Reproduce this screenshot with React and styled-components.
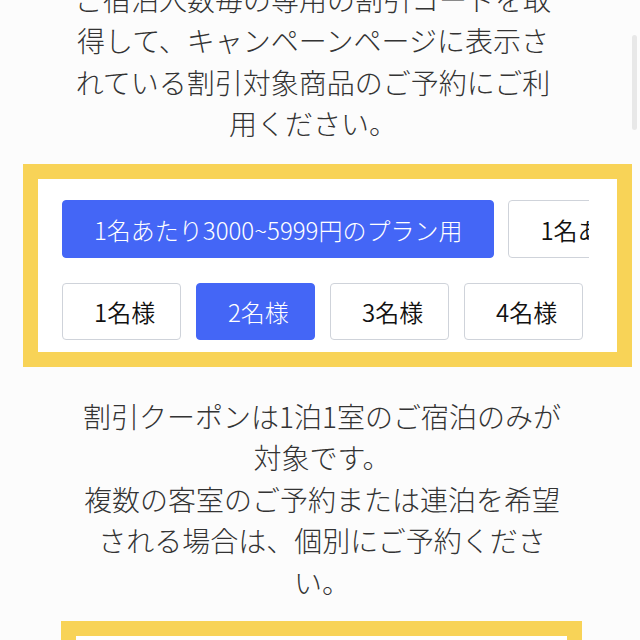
import React from "react"
import styled, { createGlobalStyle } from "styled-components"

const GlobalStyle = createGlobalStyle`
  html, body {
    margin: 0;
    padding: 0;
    background: #fcfcfc;
    overflow: hidden;
  }
  body {
    font-family: "Noto Sans CJK JP", "Noto Sans", sans-serif;
  }
`

const Page = styled.div`
  position: relative;
  width: 640px;
  height: 640px;
  overflow: hidden;
  display: flex;
  flex-direction: column;
`

const Notice = styled.p`
  margin: ${(p) => p.$top}px 0 0 ${(p) => p.$left}px;
  width: 500px;
  font-size: 28px;
  font-weight: 300;
  line-height: 41.5px;
  text-align: center;
  color: #333;
  flex: none;
`

const Panel = styled.section`
  box-sizing: border-box;
  flex: none;
  margin: ${(p) => p.$top}px 0 0 ${(p) => p.$left}px;
  width: ${(p) => p.$width}px;
  min-height: ${(p) => p.$minHeight || 0}px;
  border: 15px solid #f8d357;
  background: #fff;
  padding: 21px 28px 12px 24px;
  display: flex;
  flex-direction: column;
  gap: 25px;
`

const PlanRow = styled.div`
  display: flex;
  gap: 14px;
  overflow: hidden;
`

const GuestRow = styled.div`
  display: flex;
  gap: 15px;
`

const Choice = styled.button`
  flex: none;
  box-sizing: border-box;
  height: ${(p) => p.$height}px;
  width: ${(p) => (p.$width ? `${p.$width}px` : "auto")};
  padding: 0 31px;
  font-family: inherit;
  font-size: 24px;
  font-weight: ${(p) => (p.$active ? 300 : 350)};
  white-space: nowrap;
  border-radius: 4px;
  border: 1px solid ${(p) => (p.$active ? "#4466f6" : "#cfd3da")};
  background: ${(p) => (p.$active ? "#4466f6" : "#fff")};
  color: ${(p) => (p.$active ? "#fff" : "#111")};
  cursor: pointer;
`

const Scrollbar = styled.div`
  position: absolute;
  top: 35px;
  right: 3px;
  width: 5px;
  height: 95px;
  border-radius: 3px;
  background: #e8e8e8;
`

const plans = [
  "1名あたり3000~5999円のプラン用",
  "1名あたり6000~9999円のプラン用",
]
const guests = ["1名様", "2名様", "3名様", "4名様"]

export default function App() {
  return (
    <>
      <GlobalStyle />
      <Page>
        <Notice $top={-21.5} $left={63}>
          ご宿泊人数毎の専用の割引コードを取
          <br />
          得して、キャンペーンページに表示さ
          <br />
          れている割引対象商品のご予約にご利
          <br />
          用ください。
        </Notice>

        <Panel $top={19.5} $left={23} $width={609}>
          <PlanRow>
            {plans.map((p, i) => (
              <Choice key={p} $height={58} $active={i === 0}>
                {p}
              </Choice>
            ))}
          </PlanRow>
          <GuestRow>
            {guests.map((g, i) => (
              <Choice key={g} $height={57} $width={119} $active={i === 1}>
                {g}
              </Choice>
            ))}
          </GuestRow>
        </Panel>

        <Notice $top={28.5} $left={72}>
          割引クーポンは1泊1室のご宿泊のみが
          <br />
          対象です。
          <br />
          複数の客室のご予約または連泊を希望
          <br />
          される場合は、個別にご予約くださ
          <br />
          い。
        </Notice>

        <Panel $top={18} $left={61} $width={521} $minHeight={120} />

        <Scrollbar />
      </Page>
    </>
  )
}
